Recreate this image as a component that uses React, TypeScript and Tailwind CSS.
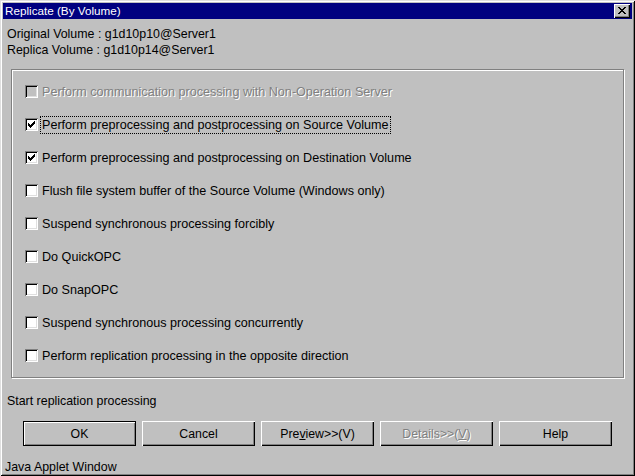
import type { ReactNode } from 'react'

const FONT = "font-['Liberation_Sans',Arial,sans-serif]"

const OPTIONS: { label: string; checked?: boolean; disabled?: boolean; focused?: boolean }[] = [
  { label: 'Perform communication processing with Non-Operation Server', disabled: true },
  { label: 'Perform preprocessing and postprocessing on Source Volume', checked: true, focused: true },
  { label: 'Perform preprocessing and postprocessing on Destination Volume', checked: true },
  { label: 'Flush file system buffer of the Source Volume (Windows only)' },
  { label: 'Suspend synchronous processing forcibly' },
  { label: 'Do QuickOPC' },
  { label: 'Do SnapOPC' },
  { label: 'Suspend synchronous processing concurrently' },
  { label: 'Perform replication processing in the opposite direction' },
]

// pixel rows of the classic check mark, 7x7
const CHECK = ['......#', '.....##', '#...###', '##.###.', '#####..', '.###...', '..#....']
const CROSS = ['##....##', '.##..##.', '..####..', '...##...', '..####..', '.##..##.', '##....##']

function Pixels({ rows, x, y }: { rows: string[]; x: number; y: number }) {
  return (
    <>
      {rows.flatMap((r, j) =>
        r.split('').map((c, i) => (c === '#' ? <rect key={`${i}-${j}`} x={x + i} y={y + j} width={1} height={1} /> : null)),
      )}
    </>
  )
}

function Checkbox({ checked, disabled }: { checked?: boolean; disabled?: boolean }) {
  return (
    <span
      className={`relative block h-[13px] w-[13px] shrink-0 shadow-[inset_1px_1px_0_#808080,inset_-1px_-1px_0_#fff,inset_2px_2px_0_#000,inset_-2px_-2px_0_#dfdfdf] ${
        disabled ? 'bg-[#c0c0c0]' : 'bg-white'
      }`}
    >
      {checked && (
        <svg width={13} height={13} viewBox="0 0 13 13" className="absolute left-0 top-0" shapeRendering="crispEdges">
          <Pixels rows={CHECK} x={3} y={3} />
        </svg>
      )}
    </span>
  )
}

function Button({ children, primary, disabled }: { children: ReactNode; primary?: boolean; disabled?: boolean }) {
  return (
    <button
      type="button"
      className={`flex h-[25px] w-[113px] items-center justify-center bg-[#c0c0c0] text-[12.3px] ${
        primary
          ? 'border border-black shadow-[inset_1px_1px_0_#fff,inset_-1px_-1px_0_#808080]'
          : 'shadow-[inset_1px_1px_0_#fff,inset_-1px_-1px_0_#000,inset_-2px_-2px_0_#808080]'
      } ${disabled ? 'text-[#808080] [text-shadow:1px_1px_0_#fff]' : 'text-black'}`}
    >
      {children}
    </button>
  )
}

export default function App() {
  return (
    <div
      className={`flex h-[476px] w-[635px] flex-col bg-[#c0c0c0] p-[3px] text-[12.4px] leading-[16px] text-black shadow-[inset_1px_1px_0_#dfdfdf,inset_-1px_-1px_0_#000,inset_2px_2px_0_#fff,inset_-2px_-2px_0_#808080] ${FONT}`}
    >
      <div className="flex h-[19px] items-center justify-between bg-[#000080] pl-[2px] pr-[2px]">
        <span className="text-[11.7px] text-white">Replicate (By Volume)</span>
        <span className="relative block h-[14px] w-[16px] bg-[#c0c0c0] shadow-[inset_1px_1px_0_#fff,inset_-1px_-1px_0_#000,inset_-2px_-2px_0_#808080]">
          <svg width={16} height={14} viewBox="0 0 16 14" className="absolute left-0 top-0" shapeRendering="crispEdges">
            <Pixels rows={CROSS} x={4} y={3} />
          </svg>
        </span>
      </div>

      <div className="mt-[7px] px-[4px]">
        <div>Original Volume : g1d10p10@Server1</div>
        <div>Replica Volume : g1d10p14@Server1</div>
      </div>

      <div className="ml-[8px] mr-[8px] mt-[11px] border border-[#808080] shadow-[inset_1px_1px_0_#fff,1px_1px_0_#fff]">
        <div className="flex flex-col pb-[5px] pl-[13px] pt-[5px] text-[12.6px]">
          {OPTIONS.map((o) => (
            <div key={o.label} className="flex h-[33px] items-center gap-[2px]">
              <Checkbox checked={o.checked} disabled={o.disabled} />
              <span
                className={`px-[1px] ${o.focused ? 'border border-dotted border-black' : 'border border-transparent'} ${
                  o.disabled ? 'text-[#808080] [text-shadow:1px_1px_0_#fff]' : ''
                }`}
              >
                {o.label}
              </span>
            </div>
          ))}
        </div>
      </div>

      <div className="mt-[15px] px-[4px]">Start replication processing</div>

      <div className="mt-[12px] flex justify-center gap-[6px]">
        <Button primary>OK</Button>
        <Button>Cancel</Button>
        <Button>
          Pre<span className="underline">v</span>iew&gt;&gt;(V)
        </Button>
        <Button disabled>
          Details&gt;&gt;(<span className="underline">V</span>)
        </Button>
        <Button>Help</Button>
      </div>

      <div className="mt-[13px] px-[2px]">Java Applet Window</div>
    </div>
  )
}
